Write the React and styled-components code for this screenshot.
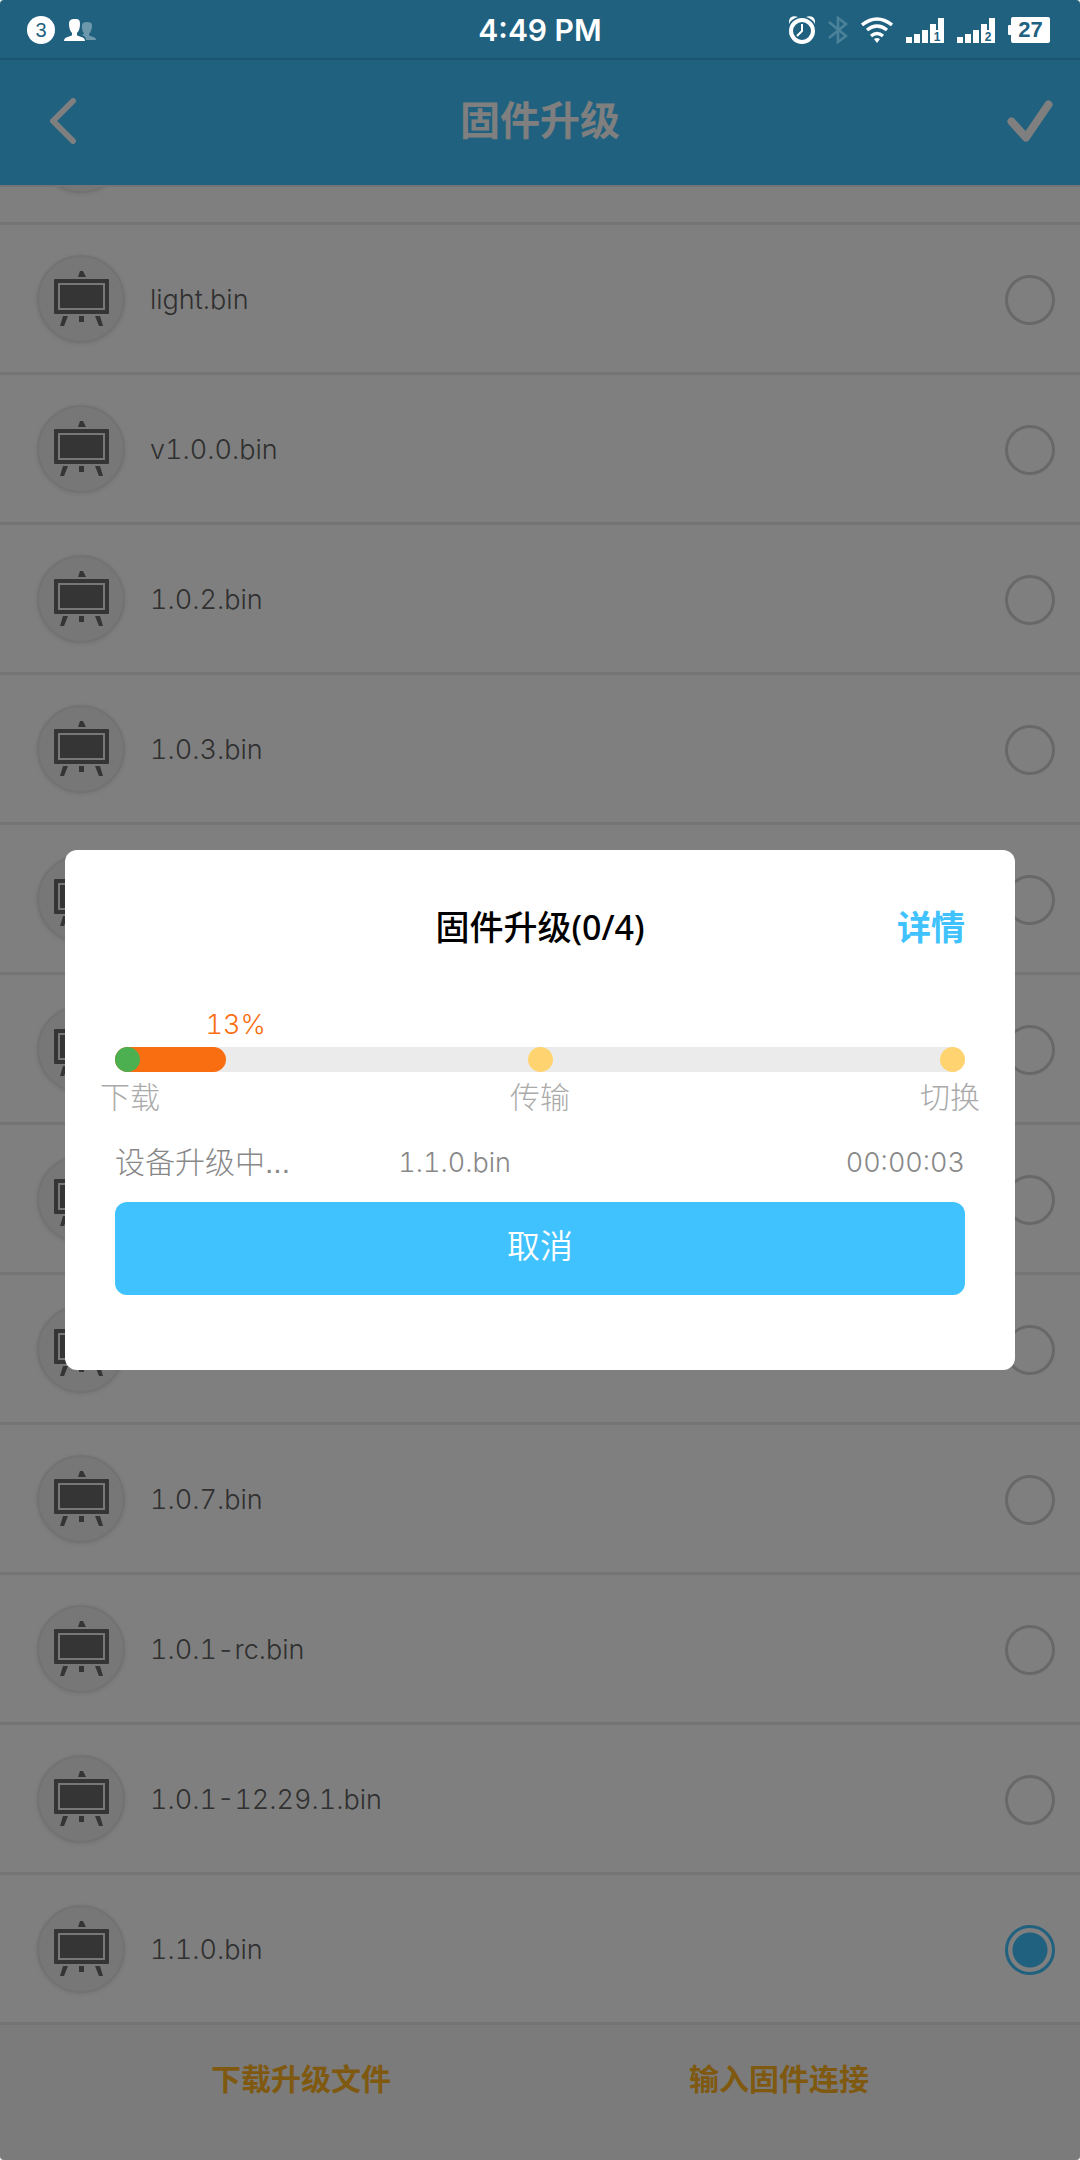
import React, { useState } from "react";
import styled, { createGlobalStyle } from "styled-components";

const latin = `"Liberation Sans", "Noto Sans CJK SC", sans-serif`;
const light = `Inter, "Liberation Sans", "Noto Sans CJK SC", sans-serif`;
const humanist = `"Noto Sans", "Noto Sans CJK SC", sans-serif`;

const GlobalStyle = createGlobalStyle`
  *, *::before, *::after { box-sizing: border-box; }
  body {
    margin: 0;
    background: #fff;
    font-family: ${latin};
  }
  button {
    margin: 0;
    padding: 0;
    border: 0;
    background: none;
    font: inherit;
    color: inherit;
    cursor: pointer;
  }
  h1, h2, p, ul { margin: 0; padding: 0; }
`;

const Screen = styled.div`
  display: flex;
  flex-direction: column;
  height: 100vh;
  overflow: hidden;
  border-radius: 4px;
  background: #fff;
`;

const StatusBar = styled.div`
  display: grid;
  grid-template-columns: 1fr auto 1fr;
  align-items: center;
  flex: none;
  height: 60px;
  padding: 2px 30px 0;
  border-bottom: 2px solid #1a5470;
  background: #20617f;
  color: #fff;
`;

const StatusGroup = styled.div`
  display: flex;
  align-items: center;
  justify-content: ${(p) => (p.$end ? "flex-end" : "flex-start")};
  gap: ${(p) => (p.$end ? "13px" : "9px")};
  svg { display: block; }
`;

const Clock = styled.span`
  font-family: ${light};
  font-size: 30px;
  line-height: 40px;
  font-weight: 600;
`;

const CountBadge = styled.span`
  width: 28px;
  height: 28px;
  margin-left: -3px;
  border-radius: 50%;
  background: #fff;
  color: #20617f;
  font-size: 20px;
  line-height: 28px;
  text-align: center;
`;

const Battery = styled.span`
  display: flex;
  align-items: center;
  color: #20617f;
  font-size: 22px;
  line-height: 26px;
  font-weight: 700;
  &::before {
    content: "";
    width: 3px;
    height: 10px;
    border-radius: 1px 0 0 1px;
    background: #fff;
  }
`;

const BatteryBody = styled.span`
  width: 39px;
  height: 26px;
  border-radius: 2px;
  background: #fff;
  text-align: center;
`;

const Header = styled.header`
  display: grid;
  grid-template-columns: 1fr auto 1fr;
  align-items: center;
  flex: none;
  height: 125px;
  padding: 0 25px 3px;
  background: #40c2fe;
  color: #fff;
`;

const HeaderTitle = styled.h1`
  font-size: 40px;
  line-height: 56px;
  font-weight: 700;
`;

const IconButton = styled.button`
  justify-self: ${(p) => (p.$end ? "end" : "start")};
  width: ${(p) => (p.$end ? "50px" : "76px")};
  height: 75px;
  svg { display: block; margin: auto; }
`;

const FileList = styled.ul`
  display: flex;
  flex: 1;
  flex-direction: column;
  justify-content: flex-end;
  min-height: 0;
  overflow: hidden;
  border-top: 2px solid #eaeaea;
  list-style: none;
`;

const FileRow = styled.li`
  flex: none;
  height: 150px;
  border-bottom: 3px solid #e8e8e8;
`;

const FileLabel = styled.label`
  display: flex;
  align-items: center;
  gap: 25px;
  height: 100%;
  padding: 3px 25px 0 37px;
`;

const Thumb = styled.span`
  display: grid;
  place-items: center;
  width: 88px;
  height: 88px;
  margin-bottom: 2px;
  border: 2px solid #e4e4e4;
  border-radius: 50%;
  background: #eee;
  box-shadow: 0 1px 5px #e4e4e4;
`;

const FileName = styled.span`
  flex: 1;
  color: #606060;
  font-family: ${light};
  font-size: 27px;
  line-height: 40px;
  font-weight: 300;
  font-variant-numeric: tabular-nums;
`;

const Radio = styled.input`
  appearance: none;
  width: 50px;
  height: 50px;
  margin: 0;
  border: 3px solid #d0d0d0;
  border-radius: 50%;
  &:checked {
    border-color: #40c2fe;
    background: radial-gradient(circle, #40c2fe 17px, transparent 18px);
  }
`;

const Footer = styled.footer`
  display: flex;
  align-items: flex-start;
  justify-content: space-around;
  flex: none;
  height: 135px;
  padding: 35px 62px 0;
  background: #f6f6f6;
`;

const FooterAction = styled.button`
  color: #ffb31e;
  font-size: 30px;
  line-height: 40px;
  font-weight: 700;
`;

const Backdrop = styled.div`
  position: fixed;
  inset: 60px 0 0;
  display: flex;
  align-items: center;
  justify-content: center;
  padding: 0 65px;
  border-radius: 0 0 4px 4px;
  background: rgba(0, 0, 0, 0.5);
`;

const Dialog = styled.section`
  display: flex;
  flex-direction: column;
  width: 100%;
  padding: 47px 50px 75px;
  border-radius: 12px;
  background: #fff;
`;

const DialogHead = styled.div`
  display: grid;
  grid-template-columns: 1fr auto 1fr;
  align-items: center;
  font-family: ${humanist};
  font-size: 34px;
  line-height: 60px;
`;

const DialogTitle = styled.h2`
  grid-column: 2;
  color: #000;
  font-size: inherit;
  font-weight: 500;
`;

const DetailButton = styled.button`
  justify-self: end;
  color: #40c2fe;
  font-weight: 700;
`;

const Percent = styled.p`
  margin-top: 50px;
  color: #fa6e12;
  font-family: ${light};
  font-size: 27px;
  line-height: 36px;
  font-weight: 300;
  font-variant-numeric: tabular-nums;
`;

const Track = styled.div`
  position: relative;
  display: flex;
  justify-content: space-between;
  margin-top: 4px;
  border-radius: 13px;
  background: #ebebeb;
`;

const Fill = styled.div`
  position: absolute;
  inset: 0 auto 0 0;
  border-radius: 13px;
  background: #fa6e12;
`;

const StepDot = styled.span`
  z-index: 1;
  width: 25px;
  height: 25px;
  border-radius: 50%;
  background: ${(p) => (p.$done ? "#4caf50" : "#ffd470")};
`;

const StepNames = styled.div`
  display: flex;
  justify-content: space-between;
  margin: 6px -15px 0;
  color: #aaa;
  font-size: 30px;
  line-height: 40px;
  font-weight: 300;
`;

const Progress = styled.div`
  display: grid;
  grid-template-columns: repeat(3, 1fr);
  margin-top: 25px;
  color: #888;
  font-size: 30px;
  line-height: 40px;
  font-weight: 300;
`;

const Figure = styled.span`
  font-family: ${light};
  font-size: 27px;
  font-variant-numeric: tabular-nums;
  text-align: ${(p) => (p.$end ? "right" : "left")};
`;

const CancelButton = styled.button`
  height: 93px;
  margin-top: 19px;
  padding-bottom: 4px;
  border-radius: 12px;
  background: #40c2fe;
  color: #fff;
  font-size: 33px;
  line-height: 40px;
  font-weight: 350;
`;

const People = () => (
  <svg width="32" height="22" viewBox="0 0 32 22" aria-hidden="true">
    <path fill="#fff" opacity=".35" d="M18 6c0-2 2-3 5-3s5 1 5 3c0 4-1 7-3 9v1c1 2 7 1 7 5H22c0-3-2-4-4-5 1-1 2-1 2-2-2-2-2-4-2-8z" />
    <path fill="#fff" d="M5 5c0-4 2-5 6-5s5 1 5 5c0 4-1 7-3 9v2c1 2 8 1 8 6H0c0-5 7-4 8-6v-2C6 12 5 9 5 5z" />
  </svg>
);

const Alarm = () => (
  <svg width="26" height="28" viewBox="0 0 26 28" fill="none" stroke="#fff" aria-hidden="true">
    <circle cx="13" cy="15" r="11" strokeWidth="4" />
    <path d="M13 8v7l-5 5" strokeWidth="2" />
    <path fill="#fff" stroke="none" d="M0 8C-1 1 4-1 9 1 5 2 2 4 0 8zM26 8c1-7-4-9-9-7 4 1 7 3 9 7z" />
  </svg>
);

const Bluetooth = () => (
  <svg width="20" height="28" viewBox="0 0 20 28" fill="none" stroke="#4b829a" strokeWidth="2.6" aria-hidden="true">
    <path d="M1 6l17 14-8 6V2l8 6L1 22" />
  </svg>
);

const Wifi = () => (
  <svg width="32" height="26" viewBox="0 0 32 26" fill="none" stroke="#fff" strokeWidth="3.4" aria-hidden="true">
    <path d="M1 8Q16-4 31 8M6 13q10-8 20 0M10 19q6-5 12 0" />
    <path fill="#fff" stroke="none" d="M13 22q3-2 6 0l-3 4z" />
  </svg>
);

const Signal = ({ sim }) => (
  <svg width="38" height="25" viewBox="0 0 38 25" fill="#fff" aria-hidden="true">
    <path d="M0 19h6v6H0zM8 16h6v9H8zM16 12h6v13h-6zM24 6h6v6h2V0h6v25H24z" />
    <text x="31" y="23" textAnchor="middle" fill="#20617f" fontSize="12" fontWeight="700">{sim}</text>
  </svg>
);

const Board = () => (
  <svg width="57" height="56" viewBox="0 0 57 56" fill="#6a6a6a" aria-hidden="true">
    <path d="M27 0h3l3 6h-8zM26 45h5v6h-5zM10 45h5l-4 10H7zM42 45h5l3 10h-4z" />
    <path fillRule="evenodd" d="M2 8h53q1 0 1 1v33q0 1-1 1H2q-1 0-1-1V9q0-1 1-1zm3 4v27h47V12z" />
    <path d="M7 14h43v23H7z" />
  </svg>
);

const files = [
  "",
  "light.bin",
  "v1.0.0.bin",
  "1.0.2.bin",
  "1.0.3.bin",
  "",
  "",
  "",
  "",
  "1.0.7.bin",
  "1.0.1-rc.bin",
  "1.0.1-12.29.1.bin",
  "1.1.0.bin",
];

const percent = 13;

export default function App() {
  const [selected, setSelected] = useState(files.length - 1);
  return (
    <>
      <GlobalStyle />
      <Screen>
        <StatusBar>
          <StatusGroup>
            <CountBadge>3</CountBadge>
            <People />
          </StatusGroup>
          <Clock>4:49 PM</Clock>
          <StatusGroup $end>
            <Alarm />
            <Bluetooth />
            <Wifi />
            <Signal sim="1" />
            <Signal sim="2" />
            <Battery><BatteryBody>27</BatteryBody></Battery>
          </StatusGroup>
        </StatusBar>

        <Header>
          <IconButton aria-label="返回">
            <svg width="27" height="46" viewBox="0 0 27 46" fill="none" stroke="currentColor" strokeWidth="6" strokeLinecap="round" strokeLinejoin="round">
              <path d="M23 3L3 23l20 20" />
            </svg>
          </IconButton>
          <HeaderTitle>固件升级</HeaderTitle>
          <IconButton $end aria-label="确定">
            <svg width="46" height="42" viewBox="0 0 46 42" fill="none" stroke="currentColor" strokeWidth="8" strokeLinecap="round" strokeLinejoin="round">
              <path d="M4.500 21.500L19 37.500 41.500 4.500" />
            </svg>
          </IconButton>
        </Header>

        <FileList>
          {files.map((name, i) => (
            <FileRow key={i}>
              <FileLabel>
                <Thumb><Board /></Thumb>
                <FileName>{name}</FileName>
                <Radio
                  type="radio"
                  name="firmware"
                  checked={selected === i}
                  onChange={() => setSelected(i)}
                />
              </FileLabel>
            </FileRow>
          ))}
        </FileList>

        <Footer>
          <FooterAction>下载升级文件</FooterAction>
          <FooterAction>输入固件连接</FooterAction>
        </Footer>
      </Screen>

      <Backdrop>
        <Dialog role="dialog" aria-labelledby="upgrade-title">
          <DialogHead>
            <DialogTitle id="upgrade-title">固件升级(0/4)</DialogTitle>
            <DetailButton>详情</DetailButton>
          </DialogHead>
          <Percent style={{ paddingLeft: `calc(${percent}% - 20px)` }}>{percent}%</Percent>
          <Track role="progressbar" aria-valuenow={percent} aria-labelledby="upgrade-title">
            <Fill style={{ width: `${percent}%` }} />
            <StepDot $done />
            <StepDot />
            <StepDot />
          </Track>
          <StepNames>
            <span>下载</span>
            <span>传输</span>
            <span>切换</span>
          </StepNames>
          <Progress>
            <span>设备升级中...</span>
            <Figure>1.1.0.bin</Figure>
            <Figure $end>00:00:03</Figure>
          </Progress>
          <CancelButton>取消</CancelButton>
        </Dialog>
      </Backdrop>
    </>
  );
}
